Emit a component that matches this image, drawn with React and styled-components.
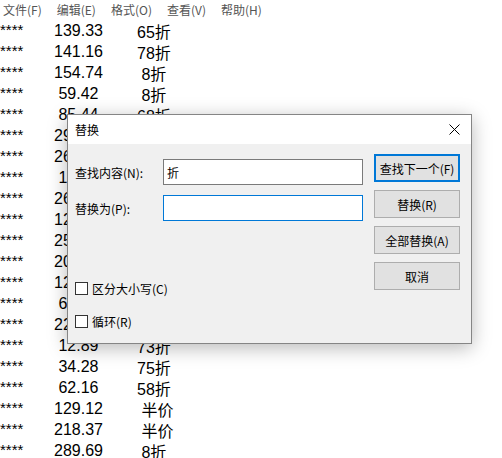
import React from 'react';
import styled, { createGlobalStyle } from 'styled-components';

const GlobalStyle = createGlobalStyle`
  html, body {
    margin: 0;
    padding: 0;
    background: #fff;
    overflow: hidden;
  }
  body {
    width: 502px;
    height: 458px;
  }
`;

const rows = [
  { num: '139.33', disc: '65折' },
  { num: '141.16', disc: '78折' },
  { num: '154.74', disc: ' 8折' },
  { num: ' 59.42', disc: ' 8折' },
  { num: ' 85.44', disc: '68折' },
  { num: '299.00', disc: '75折' },
  { num: '268.20', disc: '68折' },
  { num: ' 19.90', disc: '85折' },
  { num: '260.10', disc: '58折' },
  { num: '128.00', disc: '65折' },
  { num: '259.00', disc: '78折' },
  { num: '209.30', disc: ' 8折' },
  { num: '126.50', disc: '65折' },
  { num: ' 69.90', disc: '75折' },
  { num: '229.00', disc: '68折' },
  { num: ' 12.89', disc: '73折' },
  { num: ' 34.28', disc: '75折' },
  { num: ' 62.16', disc: '58折' },
  { num: '129.12', disc: ' 半价' },
  { num: '218.37', disc: ' 半价' },
  { num: '289.69', disc: ' 8折' },
];

const menus = ['文件(F)', '编辑(E)', '格式(O)', '查看(V)', '帮助(H)'];

const Window = styled.div`
  position: relative;
  width: 502px;
  height: 458px;
  background: #fff;
  overflow: hidden;
  font-family: "Liberation Sans", "Noto Sans CJK SC", sans-serif;
`;

const MenuBar = styled.div`
  display: flex;
  align-items: center;
  gap: 15px;
  height: 20px;
  padding: 0 0 0 3px;
  font-size: 12px;
  color: #555;
  font-family: "Noto Sans CJK SC", sans-serif;
`;

const MenuItem = styled.span`
  line-height: 18px;
`;

const Editor = styled.div`
  display: flex;
  flex-direction: column;
`;

const Line = styled.div`
  display: flex;
  height: 21px;
  align-items: center;
  font-size: 16px;
  color: #000;
  white-space: pre;
`;

const Stars = styled.span`
  width: 54px;
  font-size: 15px;
  align-self: flex-start;
  line-height: 20px;
`;

const Num = styled.span`
  width: 83px;
`;

const Dialog = styled.div`
  position: absolute;
  left: 67px;
  top: 114px;
  width: 405px;
  height: 230px;
  box-sizing: border-box;
  border: 1px solid #858585;
  background: #f0f0f0;
  box-shadow: 0 4px 18px rgba(0, 0, 0, 0.28);
  display: flex;
  flex-direction: column;
  font-family: "Noto Sans CJK SC", "Liberation Sans", sans-serif;
  font-size: 12px;
  color: #000;
`;

const TitleBar = styled.div`
  height: 29px;
  background: #fff;
  display: flex;
  align-items: center;
  justify-content: space-between;
  padding: 0 11px 0 7px;
`;

const Title = styled.span`
  font-size: 12px;
`;

const CloseIcon = () => (
  <svg width="11" height="11" viewBox="0 0 11 11">
    <path d="M0.5 0.5 L10.5 10.5 M10.5 0.5 L0.5 10.5" stroke="#000" strokeWidth="1" fill="none" />
  </svg>
);

const Body = styled.div`
  flex: 1;
  display: flex;
`;

const Form = styled.div`
  display: flex;
  flex-direction: column;
  padding-left: 7px;
`;

const Fields = styled.div`
  display: grid;
  grid-template-columns: 88px 200px;
  row-gap: 10px;
  margin-top: 15px;
  align-items: center;
`;

const Label = styled.label`
  font-size: 12px;
`;

const Input = styled.div`
  box-sizing: border-box;
  height: 26px;
  border: 1px solid ${p => (p.$focused ? '#0078d7' : '#7a7a7a')};
  background: #fff;
  padding-left: 3px;
  display: flex;
  align-items: center;
  font-size: 12px;
`;

const Checks = styled.div`
  display: flex;
  flex-direction: column;
  gap: 13px;
  margin-top: 57px;
`;

const CheckRow = styled.div`
  display: flex;
  align-items: center;
  gap: 4px;
  height: 20px;
`;

const Box = styled.span`
  box-sizing: border-box;
  width: 13px;
  height: 13px;
  border: 1px solid #333;
  background: #fff;
`;

const Buttons = styled.div`
  display: flex;
  flex-direction: column;
  gap: 8px;
  margin: 10px 0 0 11px;
`;

const Button = styled.div`
  box-sizing: border-box;
  width: 86px;
  height: 28px;
  display: flex;
  align-items: center;
  justify-content: center;
  background: #e1e1e1;
  border: ${p => (p.$default ? '2px solid #0078d7' : '1px solid #adadad')};
  font-size: 12px;
`;

export default function App() {
  return (
    <Window>
      <GlobalStyle />
      <MenuBar>
        {menus.map(m => <MenuItem key={m}>{m}</MenuItem>)}
      </MenuBar>
      <Editor>
        {rows.map((r, i) => (
          <Line key={i}>
            <Stars>****</Stars>
            <Num>{r.num}</Num>
            <span>{r.disc}</span>
          </Line>
        ))}
      </Editor>

      <Dialog>
        <TitleBar>
          <Title>替换</Title>
          <CloseIcon />
        </TitleBar>
        <Body>
          <Form>
            <Fields>
              <Label>查找内容(N):</Label>
              <Input>折</Input>
              <Label>替换为(P):</Label>
              <Input $focused />
            </Fields>
            <Checks>
              <CheckRow><Box />区分大小写(C)</CheckRow>
              <CheckRow><Box />循环(R)</CheckRow>
            </Checks>
          </Form>
          <Buttons>
            <Button $default>查找下一个(F)</Button>
            <Button>替换(R)</Button>
            <Button>全部替换(A)</Button>
            <Button>取消</Button>
          </Buttons>
        </Body>
      </Dialog>
    </Window>
  );
}
